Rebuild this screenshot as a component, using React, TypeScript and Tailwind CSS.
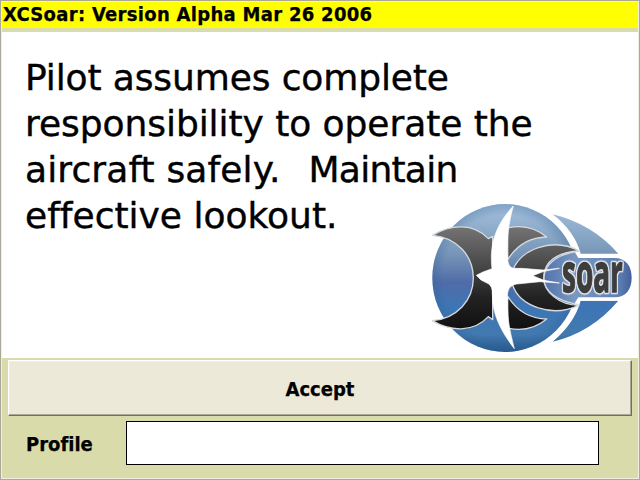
const bold =
  "font-bold [font-family:'DejaVu_Sans_Condensed','DejaVu_Sans',sans-serif] font-stretch-condensed [-webkit-text-stroke:0.25px_black]";

function Logo() {
  return (
    <svg className="absolute left-[424px] top-[197px] overflow-visible" width="213" height="160" viewBox="0 0 639 480">
      <defs>
        <linearGradient id="blue" gradientUnits="userSpaceOnUse" x1="0" y1="18" x2="0" y2="462">
          <stop offset="0" stopColor="#a2bddb" />
          <stop offset=".12" stopColor="#95b2d0" />
          <stop offset=".33" stopColor="#7897b8" />
          <stop offset=".53" stopColor="#506ca8" />
          <stop offset=".7" stopColor="#3d76b5" />
          <stop offset=".88" stopColor="#4279af" />
          <stop offset="1" stopColor="#27598d" />
        </linearGradient>
        <linearGradient id="dark" gradientUnits="userSpaceOnUse" x1="0" y1="86" x2="0" y2="390">
          <stop offset="0" stopColor="#747474" />
          <stop offset=".35" stopColor="#4c4c4c" />
          <stop offset=".7" stopColor="#222" />
          <stop offset="1" stopColor="#111" />
        </linearGradient>
        <radialGradient id="rim">
          <stop offset=".85" stopColor="#2a5d94" stopOpacity="0" />
          <stop offset="1" stopColor="#2a5d94" stopOpacity=".28" />
        </radialGradient>
        <linearGradient id="pill">
          <stop offset="0" stopColor="#5373af" />
          <stop offset=".35" stopColor="#7898c0" />
          <stop offset=".85" stopColor="#5e80b3" />
          <stop offset="1" stopColor="#435f9c" />
        </linearGradient>
        <linearGradient id="bird">
          <stop offset="0" stopColor="#fff" />
          <stop offset=".8" stopColor="#fff" />
          <stop offset="1" stopColor="#e8e8e8" />
        </linearGradient>
      </defs>
      <ellipse cx="240" cy="240" rx="218" ry="222" fill="url(#blue)" />
      <ellipse cx="240" cy="240" rx="218" ry="222" fill="url(#rim)" />
      <path d="M383 49Q500 77 580 167H467Q449 100 383 49Z" fill="url(#blue)" />
      <path d="M383 431Q500 403 580 308H467Q449 375 383 431Z" fill="url(#blue)" />
      <g fill="url(#dark)" stroke="#d5d9de" strokeWidth="4" strokeLinejoin="round">
        <path d="M22 112C75 80 145 73 190 122L203 115V365L190 356C145 405 75 400 22 368C95 362 145 307 145 240S95 118 22 112Z" />
        <path d="M248 90C290 80 330 88 365 117C315 118 275 142 248 185Z" />
        <path d="M248 390C290 400 330 392 365 363C315 362 275 338 248 295Z" />
        <path d="M263 218C285 155 380 116 464 159C400 162 356 187 356 240C356 280 400 320 462 322C380 360 285 325 263 262Z" />
      </g>
      <path d="M460 180H568C603 180 620 204 620 239S603 298 568 298H460L446 320C392 306 357 281 357 240C357 201 395 168 449 161Z" fill="url(#pill)" />
      <path d="M460 320C393 307 357 281 357 240C357 201 395 168 462 159" fill="none" stroke="#d5d9de" strokeWidth="4" />
      <path d="M460 175H582M460 304H582" stroke="#fff" strokeWidth="8" />
      <path
        d="M265 24C251 73 245 120 247 174C248 194 252 208 265 211H290L355 216L403 211L357 220L323 233L357 247L403 255L345 251L275 258C245 264 247 285 247 315C248 370 255 400 268 452C232 405 201 352 202 288C202 273 200 264 190 257L168 246L154 232L174 222L201 212C192 136 215 77 265 24Z"
        fill="url(#bird)"
        stroke="#fff"
        strokeWidth="2"
      />
      <text
        x="0"
        y="0"
        transform="translate(411 281) scale(.57 1)"
        textLength="320"
        lengthAdjust="spacingAndGlyphs"
        className="text-[160px] font-bold [font-family:'Liberation_Sans_Narrow','Open_Sans',sans-serif] [filter:drop-shadow(5px_0_0_#dfe3e8)_drop-shadow(-5px_0_0_#dfe3e8)_drop-shadow(0_4px_0_#dfe3e8)_drop-shadow(0_-4px_0_#dfe3e8)]"
        fill="#3d3d3d"
        stroke="#3d3d3d"
        strokeWidth="4"
      >
        soar
      </text>
    </svg>
  );
}

export default function App() {
  return (
    <main className="relative h-[480px] w-[640px] border border-[#aca899] text-black">
      <div className="flex h-full flex-col border border-[#f1efe2] bg-[#dadbaa]">
        <header className={"h-[26px] shrink-0 bg-[#ff0] pl-px text-[20px] leading-[25px] tracking-[0.3px] " + bold}>
          XCSoar: Version Alpha Mar 26 2006
        </header>
        <section className="mt-1 h-[326px] shrink-0 whitespace-pre bg-white pl-[23px] pt-[23px] text-[36px] leading-[46px] [font-family:'DejaVu_Sans',sans-serif] [font-variant-ligatures:none] [-webkit-text-stroke:0.4px_black]">
          <p className="tracking-[-0.12px]">Pilot assumes complete</p>
          <p className="tracking-[-0.06px]">responsibility to operate the</p>
          <p>
            <span className="tracking-[0.12px]">aircraft safely.</span>
            <span className="ml-[28px] tracking-[-0.75px]">Maintain</span>
          </p>
          <p>effective lookout.</p>
        </section>
        <button
          className={
            "ml-[6px] mt-[2px] h-[56px] w-[624px] shrink-0 border border-b-[#716f64] border-l-white border-r-[#716f64] border-t-white bg-[#ece9d8] text-[20px] shadow-[inset_-1px_-1px_0_#aca899,inset_1px_1px_0_#f1efe2] " +
            bold
          }
        >
          <span className="relative top-px">Accept</span>
        </button>
        <div className={"mt-[5px] flex items-center pl-[24px] text-[20px] " + bold}>
          <label htmlFor="profile" className="w-[100px] pt-px [font-variant-ligatures:none]">
            Profile
          </label>
          <input id="profile" className="h-[44px] w-[473px] border border-black bg-white" />
        </div>
      </div>
      <Logo />
    </main>
  );
}
